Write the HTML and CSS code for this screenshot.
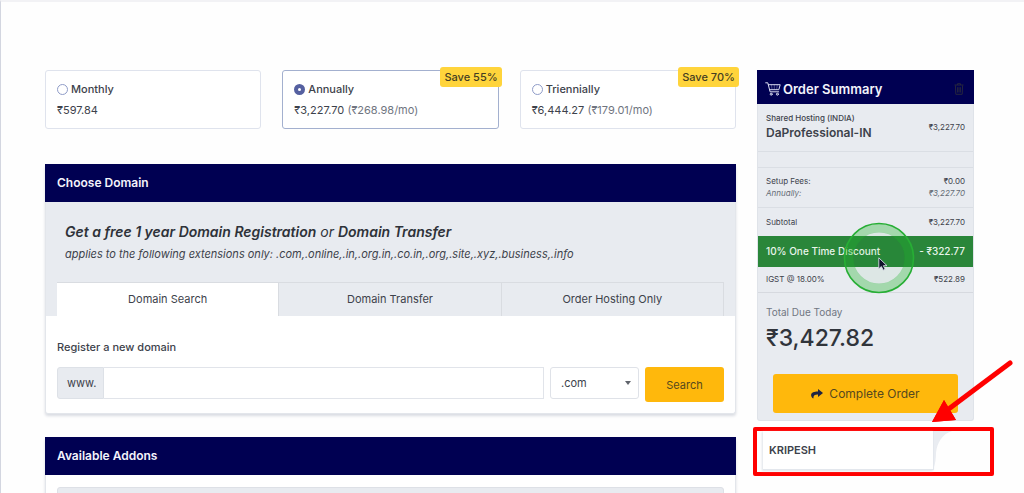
FILE: index.html
```html
<!DOCTYPE html>
<html lang="en">
<head>
<meta charset="utf-8">
<title>Choose Domain</title>
<link rel="stylesheet" href="styles.css">
</head>
<body>
<div class="page">
  <main class="main">
    <div class="plans">
      <label class="plan">
        <span class="plan-name"><input type="radio" name="cycle">Monthly</span>
        <span class="plan-price">₹597.84</span>
      </label>
      <label class="plan plan-active">
        <span class="plan-name"><input type="radio" name="cycle" checked>Annually</span>
        <span class="plan-price">₹3,227.70 <span class="per">(₹268.98/mo)</span></span>
        <span class="badge">Save 55%</span>
      </label>
      <label class="plan">
        <span class="plan-name"><input type="radio" name="cycle">Triennially</span>
        <span class="plan-price">₹6,444.27 <span class="per">(₹179.01/mo)</span></span>
        <span class="badge">Save 70%</span>
      </label>
    </div>

    <section class="card">
      <h2 class="card-title">Choose Domain</h2>
      <div class="promo">
        <p class="promo-lead"><b>Get a free 1 year Domain Registration</b> or <b>Domain Transfer</b></p>
        <p class="promo-note">applies to the following extensions only: .com,.online,.in,.org.in,.co.in,.org,.site,.xyz,.business,.info</p>
        <div class="tabs">
          <button class="tab tab-active" type="button">Domain Search</button>
          <button class="tab" type="button">Domain Transfer</button>
          <button class="tab" type="button">Order Hosting Only</button>
        </div>
      </div>
      <form class="register">
        <label class="register-label" for="domain">Register a new domain</label>
        <div class="register-row">
          <div class="group">
            <span class="prefix">www.</span>
            <input class="domain" id="domain" type="text">
          </div>
          <div class="tld-wrap">
            <select class="tld" aria-label="Extension"><option>.com</option></select>
            <svg class="caret" viewBox="0 0 6 4"><path d="M0 0h6L3 4z"/></svg>
          </div>
          <button class="search" type="button">Search</button>
        </div>
      </form>
    </section>

    <section class="card">
      <h2 class="card-title">Available Addons</h2>
      <div class="addons"><div class="addon"></div></div>
    </section>
  </main>

  <aside class="side">
    <section class="summary">
      <header class="summary-head">
        <svg class="cart" viewBox="0 0 16 14" fill="none" stroke="#d9dbef" stroke-linecap="round" stroke-linejoin="round"><path d="M.7.8h2.1l2.3 9h8.6M3.3 2.7h11.900l-1.400 5H4.600"/><path d="M6.500 3l.5 4.400M9.300 3v4.400M12.200 3l-.5 4.400" stroke-opacity=".35"/><circle cx="6.200" cy="12.200" r="1"/><circle cx="12.400" cy="12.200" r="1"/></svg>
        <h2 class="summary-title">Order Summary</h2>
        <button class="trash" type="button" aria-label="Remove"><svg viewBox="0 0 10 12" fill="none" stroke="#26263f"><path d="M.5 2h9M3.500 2V.7h3V2M1.400 2.300l.4 9h6.400l.4-9M3.600 4.200v5.300M5 4.200v5.300M6.400 4.200v5.300"/></svg></button>
      </header>
      <div class="product">
        <div><div class="product-type">Shared Hosting (INDIA)</div><div class="product-name">DaProfessional-IN</div></div>
        <span>₹3,227.70</span>
      </div>
      <div class="spacer"></div>
      <div class="fees">
        <div class="line"><span>Setup Fees:</span><span>₹0.00</span></div>
        <div class="line line-em"><span>Annually:</span><span>₹3,227.70</span></div>
      </div>
      <div class="row"><span>Subtotal</span><span>₹3,227.70</span></div>
      <div class="row discount">
        <span>10% One Time Discount</span><span>- ₹322.77</span>
        <svg class="ring" viewBox="0 0 72 72"><circle cx="36" cy="36" r="30" fill="none" stroke="#1eb428" stroke-opacity=".34" stroke-width="9"/><circle cx="36" cy="36" r="26" fill="#10a020" fill-opacity=".05"/><circle cx="36" cy="36" r="34.5" fill="none" stroke="#27ae35" stroke-width="1.6"/></svg>
        <svg class="pointer" viewBox="0 0 10 14"><path d="M.8.8v11l2.600-2.300 1.800 3.700 2-1-1.800-3.500H9z" fill="#11112b" stroke="#d8dce8" stroke-width=".9"/></svg>
      </div>
      <div class="row tax"><span>IGST @ 18.00%</span><span>₹522.89</span></div>
      <div class="total">
        <div class="total-label">Total Due Today</div>
        <div class="total-value">₹3,427.82</div>
        <button class="complete" type="button"><svg class="share" viewBox="0 0 12 10"><path d="M7 0l5 4-5 4V5.600C4 5.500 2.300 6.300 2.400 9.500 1 8.700 0 7.300.1 5.900.4 3.300 3 2.400 7 2.400z" fill="#202442"/></svg>Complete Order</button>
      </div>
    </section>
    <div class="coupon">
      <div class="code">KRIPESH</div>
      <svg class="curve" viewBox="0 0 18 38"><path d="M0 0h18C8 3 3 12 2 22c0 6-1 11-2 14z" fill="#e9ecf1"/></svg>
    </div>
    <svg class="arrow" viewBox="0 0 84 66"><path d="M80 4L20 49" stroke="#f00" stroke-width="5" stroke-linecap="round"/><path d="M2 63L14 41l12 20z" fill="#f00"/><path d="M14 41L2 63l24-2z" fill="#f00"/></svg>
  </aside>
</div>
</body>
</html>
```
FILE: styles.css
```css
* { box-sizing: border-box; }

body {
  margin: 0;
  height: 100vh;
  overflow: hidden;
  background: #fefefe;
  color: #3d424b;
  font: 11px/16px Inter, "Noto Sans", sans-serif;
}

h2, p { margin: 0; }
button, input, select { font: inherit; color: inherit; }
svg { display: block; }

.page {
  display: grid;
  grid-template-columns: minmax(0, 691fr) minmax(0, 217fr);
  gap: 21px;
  align-items: start;
  padding: 68px 50px 0 44px;
  border-left: 1px solid #d3d6e0;
  border-top: 2px solid #f2f2f5;
}

.main { display: grid; gap: 23px; }

.plans {
  display: grid;
  grid-template-columns: repeat(3, 1fr);
  gap: 21px;
  margin-bottom: 12px;
}

.plan {
  position: relative;
  display: grid;
  gap: 5px;
  padding: 10px 11px;
  border: 1px solid #dfe3ed;
  border-radius: 3px;
  background: #fff;
}
.plan-active { border-color: #a3b0cf; }
.plan-name { display: flex; align-items: center; gap: 3px; font-weight: 500; }
.plan-name input {
  appearance: none;
  width: 11px;
  height: 11px;
  margin: 0;
  border: 1px solid #8f9cc8;
  border-radius: 50%;
  background: #fff;
}
.plan-name input:checked { border: 4px solid #5560a0; }
.per { color: #70757f; }
.badge {
  position: absolute;
  top: -4px;
  right: -4px;
  padding: 2px 4px;
  border-radius: 3px;
  background: #ffd43b;
  color: #453e22;
  font-weight: 500;
}

.card {
  border: 1px solid #e3e6eb;
  border-top: 0;
  border-radius: 3px;
  background: #fff;
  box-shadow: 0 2px 3px #d9dce2;
}
.card-title {
  margin: 0 -1px;
  padding: 9px 12px;
  background: #000052;
  color: #f3f3fb;
  font-size: 12px;
  line-height: 20px;
  font-weight: 600;
}

.promo { padding: 20px 11px 0; background: #e8ebf0; }
.promo-lead { padding-left: 8px; font-size: 14px; line-height: 20px; font-style: italic; color: #2e3239; }
.promo-lead b { font-weight: 600; }
.promo-note { padding: 4px 0 20px 8px; font-style: italic; }

.tabs { display: grid; grid-template-columns: repeat(3, 1fr); }
.tab {
  padding: 8px;
  border: 1px solid #d9dce1;
  border-left: 0;
  border-bottom: 0;
  background: none;
  line-height: 17px;
}
.tab-active { background: #fff; }

.register { padding: 23px 11px 11px; }
.register-label { display: block; font-weight: 500; }
.register-row { display: flex; align-items: flex-start; gap: 6px; padding-top: 12px; }
.group { display: flex; flex: 1; height: 32px; }
.prefix {
  padding: 8px 7px 8px 9px;
  border: 1px solid #dde1e7;
  border-radius: 3px 0 0 3px;
  background: #e8ebf0;
  line-height: 14px;
}
.domain { flex: 1; min-width: 0; border: 1px solid #e1e4ea; border-left: 0; background: #fff; }
.tld-wrap { position: relative; width: 89px; }
.tld {
  appearance: none;
  width: 100%;
  height: 32px;
  padding: 0 10px;
  border: 1px solid #dfe2e8;
  border-radius: 3px;
  background: #fff;
}
.caret { position: absolute; right: 8px; top: 14px; width: 6px; height: 4px; fill: #60646c; }
.search {
  width: 79px;
  height: 35px;
  border: 0;
  border-radius: 3px;
  background: #ffb80c;
  color: #56481f;
}

.addons { padding: 12px 11px; }
.addon { height: 40px; border: 1px solid #dde0e6; border-radius: 3px; background: #e8ebf0; }

.side { position: relative; font-size: 8px; line-height: 12px; }
.summary { border: 1px solid #dfe3e9; border-top: 0; border-radius: 3px; background: #e8ebf0; }
.summary-head {
  display: flex;
  align-items: center;
  gap: 2px;
  margin: 0 -1px;
  padding: 9px 10px 5px 8px;
  background: #000052;
}
.cart { width: 16px; height: 14px; }
.summary-title { flex: 1; color: #f3f3fb; font-size: 13px; line-height: 20px; font-weight: 600; }
.trash { padding: 0; border: 0; background: none; }
.trash svg { width: 10px; height: 12px; }

.product {
  display: flex;
  align-items: center;
  justify-content: space-between;
  padding: 8px 8px 9px;
  border-bottom: 1px solid #dadee4;
}
.product-type { font-weight: 500; }
.product-name { font-size: 12px; line-height: 18px; font-weight: 600; }
.spacer { height: 16px; border-bottom: 1px solid #dadee4; }
.fees { padding: 7px 8px 8px; border-bottom: 1px solid #dadee4; }
.line, .row { display: flex; align-items: center; justify-content: space-between; }
.line-em { font-style: italic; color: #656b76; }
.row { padding: 8px; }
.discount {
  position: relative;
  padding: 7px 8px;
  background: #2a863a;
  color: #e9f5eb;
  font-size: 10px;
  line-height: 17px;
  font-weight: 500;
}
.ring { position: absolute; left: 85px; top: -14px; width: 72px; height: 72px; z-index: 1; }
.pointer { position: absolute; left: 120px; top: 21px; width: 10px; height: 14px; z-index: 2; }
.tax { padding: 6px 8px 7px; border-bottom: 1px solid #d6d9df; }
.total { padding: 11px 15px 7px 8px; }
.total-label { font-size: 10px; line-height: 16px; color: #717782; }
.total-value { padding-top: 2px; font-size: 23px; line-height: 32px; font-weight: 500; color: #30343b; }
.complete {
  display: flex;
  align-items: center;
  justify-content: center;
  gap: 6px;
  width: calc(100% - 7px);
  height: 39px;
  margin: 20px 0 0 7px;
  border: 0;
  border-radius: 3px;
  background: #ffb80c;
  color: #56481f;
  font-size: 12px;
}
.share { width: 12px; height: 10px; }

.coupon {
  display: flex;
  margin: 6px -20px 0 -4px;
  padding: 0 0 2px 6px;
  border: 4px solid #f00;
  border-radius: 2px;
  background: #fefefe;
}
.code {
  flex: 0 0 171px;
  padding: 11px 6px;
  border-right: 1px solid #e3e7ed;
  border-bottom: 1px solid #e3e7ed;
  background: #fff;
  box-shadow: -1px 1px 2px #dfe4e9;
  font-size: 11px;
  line-height: 16px;
  font-weight: 600;
}
.curve { width: 18px; height: 38px; }
.arrow { position: absolute; right: -40px; bottom: 51px; width: 84px; height: 66px; z-index: 3; }
```
